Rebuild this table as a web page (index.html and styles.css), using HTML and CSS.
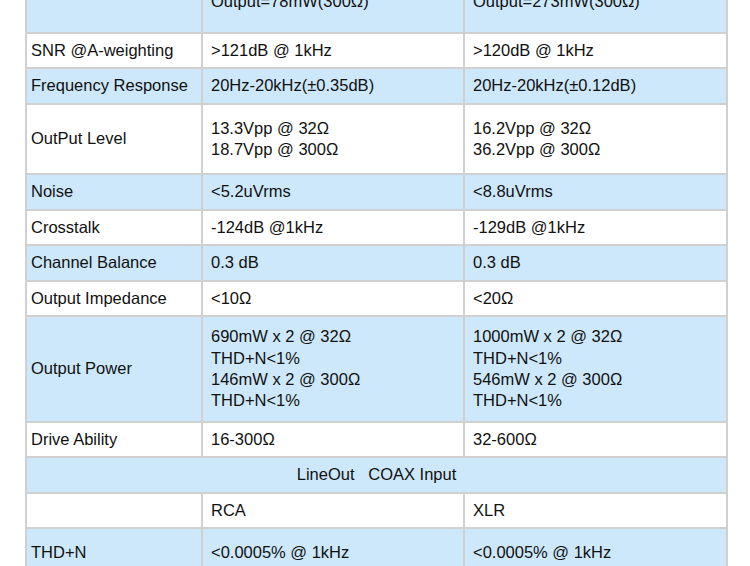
FILE: index.html
```html
<!DOCTYPE html>
<html>
<head>
<meta charset="utf-8">
<link rel="stylesheet" href="styles.css">
</head>
<body>
<table class="spec">
  <colgroup>
    <col class="w1">
    <col class="w2">
    <col class="w3">
  </colgroup>
  <tr class="blue head">
    <td class="c1"></td>
    <td class="c2">Output=690mW(32Ω)<br>Output=78mW(300Ω)</td>
    <td class="c3">Output=1000mW(32Ω)<br>Output=273mW(300Ω)</td>
  </tr>
  <tr class="u1">
    <td class="c1">SNR @A-weighting</td>
    <td class="c2">&gt;121dB @ 1kHz</td>
    <td class="c3">&gt;120dB @ 1kHz</td>
  </tr>
  <tr class="blue u1">
    <td class="c1">Frequency Response</td>
    <td class="c2">20Hz-20kHz(±0.35dB)</td>
    <td class="c3">20Hz-20kHz(±0.12dB)</td>
  </tr>
  <tr class="u2">
    <td class="c1">OutPut Level</td>
    <td class="c2">13.3Vpp @ 32Ω<br>18.7Vpp @ 300Ω</td>
    <td class="c3">16.2Vpp @ 32Ω<br>36.2Vpp @ 300Ω</td>
  </tr>
  <tr class="blue u1">
    <td class="c1">Noise</td>
    <td class="c2">&lt;5.2uVrms</td>
    <td class="c3">&lt;8.8uVrms</td>
  </tr>
  <tr class="u1">
    <td class="c1">Crosstalk</td>
    <td class="c2">-124dB @1kHz</td>
    <td class="c3">-129dB @1kHz</td>
  </tr>
  <tr class="blue u1">
    <td class="c1">Channel Balance</td>
    <td class="c2">0.3 dB</td>
    <td class="c3">0.3 dB</td>
  </tr>
  <tr class="u1">
    <td class="c1">Output Impedance</td>
    <td class="c2">&lt;10Ω</td>
    <td class="c3">&lt;20Ω</td>
  </tr>
  <tr class="blue u3">
    <td class="c1">Output Power</td>
    <td class="c2">690mW x 2 @ 32Ω<br>THD+N&lt;1%<br>146mW x 2 @ 300Ω<br>THD+N&lt;1%</td>
    <td class="c3">1000mW x 2 @ 32Ω<br>THD+N&lt;1%<br>546mW x 2 @ 300Ω<br>THD+N&lt;1%</td>
  </tr>
  <tr class="u1">
    <td class="c1">Drive Ability</td>
    <td class="c2">16-300Ω</td>
    <td class="c3">32-600Ω</td>
  </tr>
  <tr class="blue u1">
    <td class="center" colspan="3">LineOut&nbsp;&nbsp;&nbsp;COAX Input</td>
  </tr>
  <tr class="u1">
    <td class="c1"></td>
    <td class="c2">RCA</td>
    <td class="c3">XLR</td>
  </tr>
  <tr class="blue tail">
    <td class="c1">THD+N</td>
    <td class="c2">&lt;0.0005% @ 1kHz</td>
    <td class="c3">&lt;0.0005% @ 1kHz</td>
  </tr>
</table>
</body>
</html>
```

FILE: styles.css
```css
html, body {
  margin: 0;
  padding: 0;
  background: #ffffff;
}

.spec {
  border-collapse: collapse;
  width: 701px;
  margin: -36px 0 0 25px;
  table-layout: fixed;
  font-family: "Liberation Sans", Arial, sans-serif;
  font-size: 16.5px;
  line-height: 21.3px;
  color: #111111;
}

.w1 { width: 176px; }
.w2 { width: 262px; }
.w3 { width: 263px; }

.spec td {
  border: 2px solid #d0d0d0;
  vertical-align: middle;
  padding: 0 8px;
  white-space: nowrap;
  overflow: hidden;
}

.spec td.c1 {
  padding-left: 4px;
}

.spec td.center {
  text-align: center;
}

.blue td {
  background: #cde8fb;
}

.head td {
  padding-bottom: 16px;
  height: 50px;
}

.u1 td {
  height: 33.4px;
}

.u2 td {
  height: 68.6px;
}

.u3 td {
  height: 104px;
}

.tail td {
  vertical-align: top;
  padding-top: 13px;
  height: 50px;
}
```
